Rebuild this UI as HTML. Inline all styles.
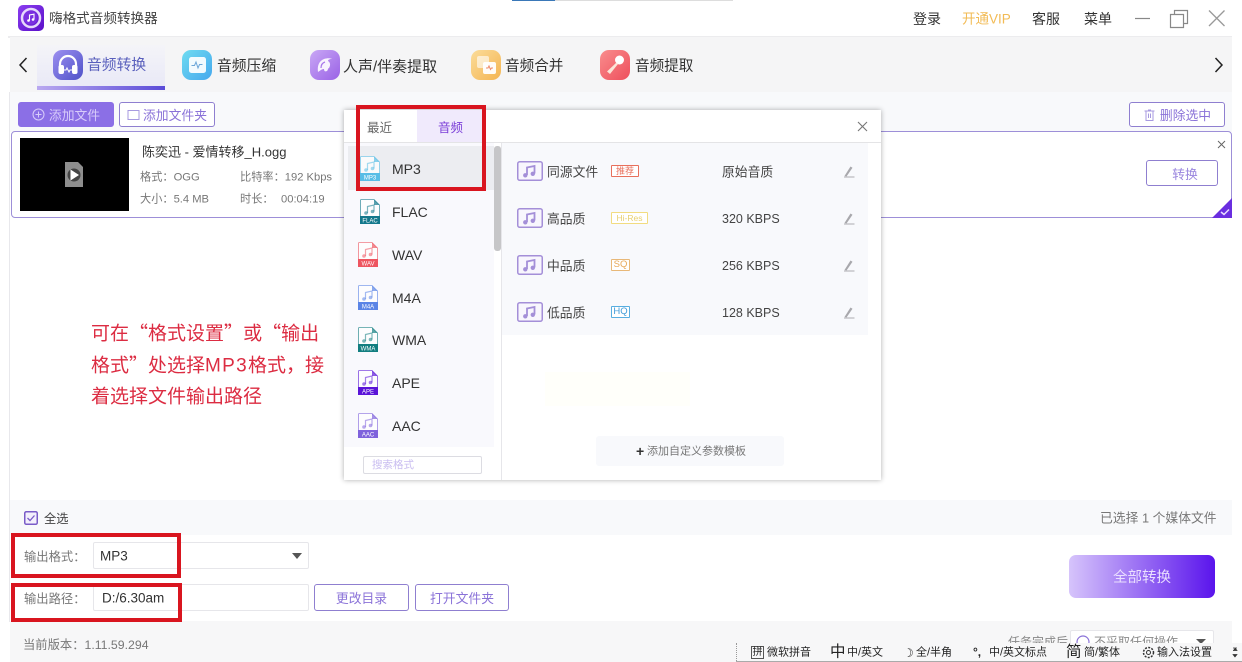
<!DOCTYPE html>
<html lang="zh-CN">
<head>
<meta charset="utf-8">
<title>嗨格式音频转换器</title>
<style>
html,body{margin:0;padding:0}
body{width:1242px;height:662px;position:relative;overflow:hidden;background:#fff;font-family:"Liberation Sans","Noto Sans CJK SC",sans-serif;color:#333}
#w{position:absolute;left:0;top:0;width:1242px;height:662px;overflow:hidden;filter:blur(.35px)}
.a{position:absolute}
.t{position:absolute;white-space:nowrap;line-height:1;transform:translateY(calc(-50% + 1px))}
.q{font-family:"Noto Sans CJK SC",sans-serif}
.btn{position:absolute;box-sizing:border-box;border:1px solid #8f7fd0;border-radius:3px;background:#fff;color:#8a72d8;font-size:12.800px;display:flex;align-items:center;justify-content:center;white-space:nowrap}
.red{position:absolute;box-sizing:border-box;border:4px solid #d9151f;z-index:20}
svg{position:absolute;display:block}
svg text{font-family:"Liberation Sans",sans-serif;font-size:6px;fill:#fff;text-anchor:middle}
.fname{position:absolute;left:392px;font-size:14px;color:#333;line-height:1;transform:translateY(-50%)}
.badge{position:absolute;left:611px;box-sizing:border-box;height:12px;border:1px solid;border-radius:1px;font-size:9px;line-height:10px;text-align:center;background:#fff}
</style>
</head>
<body>
<svg width="0" height="0" style="position:absolute">
<defs>
<symbol id="file" viewBox="0 0 20 25">
<path d="M1 .5H14L19.500 6V18H.5V1Z" fill="#fff" stroke="currentColor" stroke-width=".8" opacity=".75"/>
<path d="M14 .5V6H19.500Z" fill="currentColor" opacity=".7"/>
<rect x="0" y="17" width="20" height="8" fill="currentColor"/>
<path d="M7.500 14V7.500L14 6V12.500" fill="none" stroke="currentColor" stroke-width="1.200" opacity=".55"/>
<circle cx="6" cy="14" r="1.800" fill="currentColor" opacity=".55"/>
<circle cx="12.500" cy="12.500" r="1.800" fill="currentColor" opacity=".55"/>
</symbol>
<symbol id="note" viewBox="0 0 26 20">
<rect x=".75" y=".75" width="24.500" height="18.500" rx="2" fill="#f8f6fd" stroke="#a48fd8" stroke-width="1.500"/>
<path d="M10 14V6.500L17.500 5V12.500" fill="none" stroke="#a48fd8" stroke-width="1.800"/>
<circle cx="8.300" cy="14.300" r="2.200" fill="#a48fd8"/>
<circle cx="15.800" cy="12.800" r="2.200" fill="#a48fd8"/>
</symbol>
<symbol id="pen" viewBox="0 0 12 13">
<path d="M1.500 11 7.500 1.500 9.500 2.700 3.500 11.500Z" fill="#a8a8ac"/>
<path d="M1 12H11.500" stroke="#b8b8bc" stroke-width="1.200"/>
</symbol>
<linearGradient id="g1" x1="0" y1="0" x2="1" y2="1"><stop offset="0" stop-color="#9c8ff0"/><stop offset="1" stop-color="#4f52c8"/></linearGradient>
<linearGradient id="g2" x1="0" y1="0" x2="1" y2="1"><stop offset="0" stop-color="#6fdcf0"/><stop offset="1" stop-color="#45a8ee"/></linearGradient>
<linearGradient id="g3" x1="0" y1="0" x2="1" y2="1"><stop offset="0" stop-color="#c9a8f5"/><stop offset="1" stop-color="#9a62e6"/></linearGradient>
<linearGradient id="g4" x1="0" y1="0" x2="1" y2="1"><stop offset="0" stop-color="#fbdc9a"/><stop offset="1" stop-color="#f4b552"/></linearGradient>
<linearGradient id="g5" x1="0" y1="0" x2="1" y2="1"><stop offset="0" stop-color="#f98d8d"/><stop offset="1" stop-color="#ee4f5c"/></linearGradient>
<linearGradient id="logo" x1="0" y1="0" x2="1" y2="1"><stop offset="0" stop-color="#8a3df0"/><stop offset="1" stop-color="#5a0fc8"/></linearGradient>
</defs>
</svg>

<div id="w">
<!-- backgrounds -->
<div class="a" style="left:512px;top:0;width:221px;height:1px;background:#ddd"></div>
<div class="a" style="left:512px;top:0;width:43px;height:1px;background:#3a78b8"></div>
<div class="a" style="left:8px;top:36px;width:1224px;height:2px;background:#ececee"></div>
<div class="a" style="left:10px;top:37px;width:1222px;height:55px;background:#f5f5f6"></div>
<div class="a" style="left:10px;top:92px;width:1222px;height:40px;background:#f8f9fb"></div>
<div class="a" style="left:10px;top:218px;width:1222px;height:288px;background:#fff"></div>
<div class="a" style="left:10px;top:500px;width:1222px;height:35px;background:#f8f9fb"></div>
<div class="a" style="left:10px;top:535px;width:1222px;height:86px;background:#fff"></div>
<div class="a" style="left:10px;top:621px;width:1222px;height:41px;background:#f7f7f8"></div>
<div class="a" style="left:9px;top:92px;width:1px;height:530px;background:#e8e8ec"></div>

<!-- title bar -->
<svg style="left:18px;top:5px" width="26" height="26" viewBox="0 0 26 26">
<rect width="26" height="26" rx="5" fill="url(#logo)"/>
<circle cx="13" cy="13" r="9" fill="none" stroke="#e6d8fb" stroke-width="2.500"/>
<circle cx="13" cy="13" r="6.500" fill="#7a30e0"/>
<path d="M11.500 15.500V10L16 9.200V14.500" fill="none" stroke="#fff" stroke-width="1.100"/>
<circle cx="10.500" cy="15.500" r="1.300" fill="#fff"/><circle cx="15" cy="14.500" r="1.300" fill="#fff"/>
</svg>
<span class="t" style="left:49px;top:18px;font-size:13.600px;color:#444">嗨格式音频转换器</span>
<span class="t" style="left:913px;top:18px;font-size:14px;color:#333">登录</span>
<span class="t" style="left:962px;top:18px;font-size:13.500px;color:#f2bb55">开通VIP</span>
<span class="t" style="left:1032px;top:18px;font-size:14px;color:#333">客服</span>
<span class="t" style="left:1084px;top:18px;font-size:14px;color:#333">菜单</span>
<svg style="left:1130px;top:8px" width="100" height="22" viewBox="0 0 100 22">
<path d="M5 10.500H20" stroke="#888" stroke-width="1.200"/>
<path d="M40.500 6.500H53.500V19.500H40.500Z" fill="none" stroke="#888" stroke-width="1.200"/>
<path d="M44.500 6V2.500H57.500V15.500H54" fill="none" stroke="#888" stroke-width="1.200"/>
<path d="M79 2.500 94.500 18M94.500 2.500 79 18" stroke="#999" stroke-width="1.300"/>
</svg>

<!-- nav -->
<svg style="left:17px;top:56px" width="12" height="18" viewBox="0 0 12 18"><path d="M9.500 2 3 9l6.500 7" fill="none" stroke="#222" stroke-width="1.500"/></svg>
<svg style="left:1213px;top:56px" width="12" height="18" viewBox="0 0 12 18"><path d="M2.500 2 9 9l-6.500 7" fill="none" stroke="#222" stroke-width="1.500"/></svg>
<div class="a" style="left:37px;top:45px;width:128px;height:41px;background:linear-gradient(180deg,#f4f4f8,#e9e9f7)"></div>
<div class="a" style="left:37px;top:86px;width:128px;height:4px;background:linear-gradient(90deg,#b9a8f0,#5a4bd8)"></div>

<svg style="left:53px;top:50px" width="30" height="30" viewBox="0 0 30 30">
<rect width="30" height="30" rx="9" fill="url(#g1)"/>
<path d="M7 17V14a8 8 0 0 1 16 0v3" fill="none" stroke="#fff" stroke-width="2.200"/>
<rect x="5.500" y="15" width="5.500" height="9" rx="2" fill="#fff"/><rect x="19" y="15" width="5.500" height="9" rx="2" fill="#fff"/>
<path d="M11 20h2l1-2 2 4 1-2h2" fill="none" stroke="#fff" stroke-width="1"/>
</svg>
<span class="t" style="left:87px;top:65px;font-size:14.800px;color:#5a60bd">音频转换</span>

<svg style="left:182px;top:50px" width="30" height="30" viewBox="0 0 30 30">
<rect width="30" height="30" rx="9" fill="url(#g2)"/>
<rect x="7" y="7" width="17" height="16" rx="2.500" fill="#fff" opacity=".92"/>
<path d="M9.500 15.500h3l1.500-3.500 2 6 1.500-3.500h3" fill="none" stroke="#6aa6d8" stroke-width="1"/>
</svg>
<span class="t" style="left:217px;top:66px;font-size:14.800px;color:#333">音频压缩</span>

<svg style="left:310px;top:50px" width="30" height="30" viewBox="0 0 30 30">
<rect width="30" height="30" rx="9" fill="url(#g3)"/>
<path d="M8 22c-1-6 1-11 6-13 3-1 6-1 8 0-3 0-4 1-4 2 2 1 3 4 1 7-1 0-1 2-2 3-2 1-3 0-3-2-2 0-3 1-6 3Z" fill="#fff" opacity=".9"/>
<path d="M11 18c0-3 1-5 4-6" fill="none" stroke="#a878ea" stroke-width="1.200"/>
</svg>
<span class="t" style="left:343px;top:66px;font-size:15px;color:#333">人声/伴奏提取</span>

<svg style="left:471px;top:50px" width="30" height="30" viewBox="0 0 30 30">
<rect width="30" height="30" rx="9" fill="url(#g4)"/>
<rect x="6" y="6" width="12" height="12" rx="2" fill="#fff" opacity=".6"/>
<rect x="12" y="12" width="13" height="12" rx="2" fill="#fff" opacity=".95"/>
<path d="M15 18h2l1-2 1.500 3.500 1-1.500h1.500" fill="none" stroke="#ee8a6a" stroke-width="1"/>
</svg>
<span class="t" style="left:505px;top:66px;font-size:14.600px;color:#333">音频合并</span>

<svg style="left:600px;top:50px" width="30" height="30" viewBox="0 0 30 30">
<rect width="30" height="30" rx="9" fill="url(#g5)"/>
<circle cx="19.500" cy="10" r="4.500" fill="#fff"/>
<path d="M16.500 12.500 18 14 10 24l-3-2.500Z" fill="#fbe5d8"/>
</svg>
<span class="t" style="left:635px;top:66px;font-size:14.600px;color:#333">音频提取</span>

<!-- toolbar -->
<div class="btn" style="left:18px;top:102px;width:96px;height:25px;background:#8b6fe6;border-color:#8b6fe6;color:#d8ccfa">
<svg style="left:13px;top:5px" width="13" height="13" viewBox="0 0 13 13"><circle cx="6.500" cy="6.500" r="5.500" fill="none" stroke="#d8ccfa"/><path d="M6.500 3.500v6M3.500 6.500h6" stroke="#d8ccfa"/></svg>
<span style="margin-left:17px">添加文件</span></div>
<div class="btn" style="left:119px;top:102px;width:96px;height:25px">
<svg style="left:7px;top:6px" width="13" height="12" viewBox="0 0 13 12"><path d="M1 1.500h11v9H1Z" fill="none" stroke="#a79ae0"/></svg>
<span style="margin-left:16px">添加文件夹</span></div>
<div class="btn" style="left:1129px;top:102px;width:96px;height:25px">
<svg style="left:14px;top:6px" width="11" height="12" viewBox="0 0 11 12"><path d="M.5 2h10M2 2v9.500h7V2M4 1h3M4.500 4.500v4.500M6.500 4.500v4.500" fill="none" stroke="#a79ae0"/></svg>
<span style="margin-left:17px">删除选中</span></div>

<!-- file card -->
<div class="a" style="left:11px;top:131px;width:1221px;height:87px;box-sizing:border-box;border:1px solid #9d8fd8;border-radius:4px;background:#fff"></div>
<div class="a" style="left:20px;top:138px;width:109px;height:73px;background:#000"></div>
<svg style="left:64px;top:161px" width="20" height="27" viewBox="0 0 20 27">
<path d="M1 1H14L19 6V26H1Z" fill="#8e8e8e"/>
<circle cx="10" cy="14" r="6.500" fill="#444"/>
<path d="M6.500 8.500 15 14l-8.500 5.500Z" fill="#fff"/>
</svg>
<span class="t" style="left:142px;top:151px;font-size:13px;color:#333">陈奕迅 - 爱情转移_H.ogg</span>
<span class="t" style="left:140px;top:177px;font-size:11.200px;color:#777">格式：OGG</span>
<span class="t" style="left:240px;top:177px;font-size:11.200px;color:#777">比特率：192 Kbps</span>
<span class="t" style="left:140px;top:199px;font-size:11.200px;color:#777">大小：5.4 MB</span>
<span class="t" style="left:240px;top:199px;font-size:11.200px;color:#777">时长：</span>
<span class="t" style="left:281px;top:199px;font-size:11.200px;color:#777">00:04:19</span>
<svg style="left:1217px;top:140px" width="9" height="9" viewBox="0 0 9 9"><path d="M1 1l7 7M8 1l-7 7" stroke="#666" stroke-width="1"/></svg>
<div class="btn" style="left:1146px;top:160px;width:72px;height:26px;color:#9a86de;padding-left:6px;padding-top:1px">转换</div>
<svg style="left:1212px;top:198px" width="20" height="20" viewBox="0 0 20 20"><path d="M20 0V20H0Z" fill="#6a2ee0"/><path d="M9 14l3 2.500 5-5" fill="none" stroke="#e8dcff" stroke-width="1.500"/></svg>

<!-- red note -->
<span class="t" style="left:91px;top:332px;font-size:19px;color:#dc2c42">可在<span class="q">“</span>格式设置<span class="q">”</span>或<span class="q">“</span>输出</span>
<span class="t" style="left:91px;top:364px;font-size:19px;color:#dc2c42">格式<span class="q">”</span>处选择<span style="letter-spacing:1.300px">MP3</span>格式，接</span>
<span class="t" style="left:91px;top:396px;font-size:19px;color:#dc2c42">着选择文件输出路径</span>

<!-- format panel -->
<div class="a" style="left:344px;top:110px;width:537px;height:370px;background:#fff;box-shadow:0 0 5px rgba(0,0,0,.32)"></div>
<div class="a" style="left:344px;top:142px;width:537px;height:1px;background:#e4e4e6"></div>
<div class="a" style="left:417px;top:110px;width:69px;height:32px;background:#f0eafc"></div>
<span class="t" style="left:367px;top:127px;font-size:12.500px;color:#666">最近</span>
<span class="t" style="left:438px;top:127px;font-size:12.500px;color:#7b3fd8">音频</span>
<svg style="left:857px;top:121px" width="11" height="11" viewBox="0 0 11 11"><path d="M1 1l9 9M10 1l-9 9" stroke="#777" stroke-width="1.100"/></svg>

<div class="a" style="left:344px;top:143px;width:150px;height:304px;background:#f9f9fd"></div>
<div class="a" style="left:348px;top:146px;width:146px;height:44px;background:#ecedf1"></div>
<div class="a" style="left:494px;top:146px;width:7px;height:105px;background:#c6c6c8;border-radius:3px"></div>
<div class="a" style="left:501px;top:143px;width:1px;height:337px;background:#e6e6ea"></div>
<div class="a" style="left:502px;top:143px;width:366px;height:192px;background:#f8f9fc"></div>

<svg style="left:360px;top:156px;color:#58bde6" width="20" height="25"><use href="#file"/><text x="10" y="23.500">MP3</text></svg><span class="fname" style="top:169px">MP3</span>
<svg style="left:360px;top:199px;color:#13788c" width="20" height="25"><use href="#file"/><text x="10" y="23.500">FLAC</text></svg><span class="fname" style="top:212px">FLAC</span>
<svg style="left:358px;top:242px;color:#ee5560" width="20" height="25"><use href="#file"/><text x="10" y="23.500">WAV</text></svg><span class="fname" style="top:255px">WAV</span>
<svg style="left:358px;top:285px;color:#5a84e6" width="20" height="25"><use href="#file"/><text x="10" y="23.500">M4A</text></svg><span class="fname" style="top:298px">M4A</span>
<svg style="left:358px;top:327px;color:#127e80" width="20" height="25"><use href="#file"/><text x="10" y="23.500">WMA</text></svg><span class="fname" style="top:340px">WMA</span>
<svg style="left:358px;top:370px;color:#5a14d8" width="20" height="25"><use href="#file"/><text x="10" y="23.500">APE</text></svg><span class="fname" style="top:383px">APE</span>
<svg style="left:358px;top:413px;color:#7f62dc" width="20" height="25"><use href="#file"/><text x="10" y="23.500">AAC</text></svg><span class="fname" style="top:426px">AAC</span>

<div class="a" style="left:363px;top:456px;width:119px;height:18px;box-sizing:border-box;border:1px solid #dcdce2;border-radius:2px;background:#fff"></div>
<span class="t" style="left:372px;top:464px;font-size:10.500px;color:#c9bdf0">搜索格式</span>

<svg style="left:517px;top:161px" width="26" height="20"><use href="#note"/></svg>
<span class="t" style="left:547px;top:172px;font-size:12.800px;color:#444">同源文件</span>
<div class="badge" style="top:165px;width:28px;border-color:#e8705c;color:#e8705c">推荐</div>
<span class="t" style="left:722px;top:172px;font-size:12.800px;color:#444">原始音质</span>
<svg style="left:843px;top:165px" width="12" height="13"><use href="#pen"/></svg>

<svg style="left:517px;top:208px" width="26" height="20"><use href="#note"/></svg>
<span class="t" style="left:547px;top:219px;font-size:12.800px;color:#444">高品质</span>
<div class="badge" style="top:212px;width:37px;border-color:#f2dc80;color:#e8d070;font-size:8.500px">Hi-Res</div>
<span class="t" style="left:722px;top:218px;font-size:12.500px;color:#444">320 KBPS</span>
<svg style="left:843px;top:212px" width="12" height="13"><use href="#pen"/></svg>

<svg style="left:517px;top:255px" width="26" height="20"><use href="#note"/></svg>
<span class="t" style="left:547px;top:266px;font-size:12.800px;color:#444">中品质</span>
<div class="badge" style="top:259px;width:19px;border-color:#e8b878;color:#e8a858;font-size:9.500px">SQ</div>
<span class="t" style="left:722px;top:265px;font-size:12.500px;color:#444">256 KBPS</span>
<svg style="left:843px;top:259px" width="12" height="13"><use href="#pen"/></svg>

<svg style="left:517px;top:302px" width="26" height="20"><use href="#note"/></svg>
<span class="t" style="left:547px;top:313px;font-size:12.800px;color:#444">低品质</span>
<div class="badge" style="top:306px;width:19px;border-color:#58aee0;color:#3f9ad8;font-size:9.500px">HQ</div>
<span class="t" style="left:722px;top:312px;font-size:12.500px;color:#444">128 KBPS</span>
<svg style="left:843px;top:306px" width="12" height="13"><use href="#pen"/></svg>

<div class="a" style="left:545px;top:372px;width:145px;height:34px;background:#fffffa"></div>
<div class="a" style="left:596px;top:436px;width:188px;height:30px;background:#f8f9fc;border-radius:3px"></div>
<span class="t" style="left:636px;top:450px;font-size:14px;color:#333;font-weight:bold">+</span>
<span class="t" style="left:647px;top:451px;font-size:11px;color:#777">添加自定义参数模板</span>

<!-- bottom -->
<svg style="left:24px;top:511px" width="14" height="14" viewBox="0 0 14 14"><rect x=".75" y=".75" width="12.500" height="12.500" rx="1.500" fill="#f3effc" stroke="#7a5cc8" stroke-width="1.500"/><path d="M3.500 7l2.500 2.500 4.500-5" fill="none" stroke="#7a5cc8" stroke-width="1.300"/></svg>
<span class="t" style="left:44px;top:518px;font-size:12.300px;color:#444">全选</span>
<span class="t" style="left:1100px;top:518px;font-size:12.800px;color:#777">已选择 1 个媒体文件</span>

<span class="t" style="left:24px;top:556px;font-size:12.300px;color:#777">输出格式：</span>
<div class="a" style="left:93px;top:542px;width:216px;height:27px;box-sizing:border-box;border:1px solid #e6e6ea;border-radius:2px;background:#fff"></div>
<span class="t" style="left:100px;top:555px;font-size:13.500px;color:#333">MP3</span>
<svg style="left:291px;top:552px" width="12" height="8" viewBox="0 0 12 8"><path d="M1 1h10L6 7Z" fill="#555"/></svg>

<span class="t" style="left:24px;top:598px;font-size:12.300px;color:#777">输出路径：</span>
<div class="a" style="left:93px;top:584px;width:216px;height:27px;box-sizing:border-box;border:1px solid #e6e6ea;border-radius:2px;background:#fff"></div>
<span class="t" style="left:102px;top:597px;font-size:13.500px;color:#333">D:/6.30am</span>
<div class="btn" style="left:314px;top:584px;width:95px;height:27px">更改目录</div>
<div class="btn" style="left:415px;top:584px;width:94px;height:27px">打开文件夹</div>

<div class="a" style="left:1069px;top:555px;width:146px;height:43px;border-radius:7px;background:linear-gradient(90deg,#d6c4fb,#5a14ec);color:#eadfff;font-size:14.500px;display:flex;align-items:center;justify-content:center">全部转换</div>

<span class="t" style="left:23px;top:644px;font-size:12.300px;color:#777">当前版本：1.11.59.294</span>
<span class="t" style="left:1008px;top:641px;font-size:12px;color:#888">任务完成后</span>
<div class="a" style="left:1070px;top:630px;width:144px;height:24px;box-sizing:border-box;border:1px solid #e6e6ea;border-radius:2px;background:#fff"></div>
<svg style="left:1076px;top:635px" width="14" height="14" viewBox="0 0 14 14"><circle cx="7" cy="7" r="6" fill="none" stroke="#8a72d8" stroke-width="1.200"/></svg>
<span class="t" style="left:1094px;top:641px;font-size:12px;color:#888">不采取任何操作</span>
<svg style="left:1195px;top:638px" width="12" height="6" viewBox="0 0 12 6"><path d="M1 1h10L6 6Z" fill="#555"/></svg>

<!-- IME bar -->
<div class="a" style="left:736px;top:643px;width:506px;height:19px;background:#f7f7f8;border-bottom:1px solid #aaa;box-sizing:border-box"></div>
<div class="a" style="left:736px;top:643px;width:0;height:18px;border-left:1px dotted #999"></div>
<div class="a" style="left:751px;top:646px;width:13px;height:13px;border:1px solid #555;box-sizing:border-box;font-size:10px;line-height:11px;text-align:center;color:#222">拼</div>
<span class="t" style="left:767px;top:652px;font-size:11px;color:#222">微软拼音</span>
<span class="t" style="left:830px;top:651px;font-size:15.500px;color:#222">中</span>
<span class="t" style="left:847px;top:652px;font-size:11px;color:#222">中/英文</span>
<span class="t" style="left:903px;top:652px;font-size:12px;color:#222">☽</span>
<span class="t" style="left:916px;top:652px;font-size:11px;color:#222">全/半角</span>
<span class="t" style="left:973px;top:651px;font-size:12px;color:#222;font-weight:bold">°,</span>
<span class="t" style="left:989px;top:652px;font-size:11px;color:#222">中/英文标点</span>
<span class="t" style="left:1066px;top:651px;font-size:15.500px;color:#222">简</span>
<span class="t" style="left:1084px;top:652px;font-size:11px;color:#222">简/繁体</span>
<svg style="left:1142px;top:646px" width="13" height="13" viewBox="0 0 13 13"><circle cx="6.500" cy="6.500" r="2" fill="none" stroke="#333"/><circle cx="6.500" cy="6.500" r="5" fill="none" stroke="#333" stroke-width="1.500" stroke-dasharray="2 1.300"/></svg>
<span class="t" style="left:1157px;top:652px;font-size:11px;color:#222">输入法设置</span>
<svg style="left:1232px;top:647px" width="6" height="11" viewBox="0 0 6 11"><path d="M1 1h4M1 3.500h4L3 1M3 10 1 7.500h4Z" fill="#333" stroke="#333" stroke-width=".7"/></svg>

<!-- red highlight boxes -->
<div class="red" style="left:356px;top:105px;width:130px;height:86px"></div>
<div class="red" style="left:11px;top:533px;width:170px;height:45px"></div>
<div class="red" style="left:11px;top:583px;width:171px;height:39px"></div>
</div>
</body>
</html>
